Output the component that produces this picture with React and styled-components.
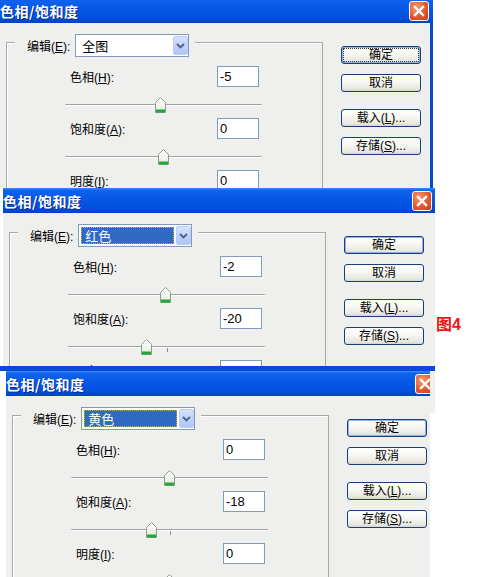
import React from 'react';
import styled, { createGlobalStyle } from 'styled-components';

const FACE = '#EFEFED';
const FRAME_BLUE = '#0A48D6';

const GlobalStyle = createGlobalStyle`
  html, body {
    margin: 0;
    padding: 0;
    background: #fff;
  }
  body {
    font-family: "Liberation Sans", "Noto Sans CJK SC", sans-serif;
    font-size: 12px;
    color: #000;
  }
`;

const Page = styled.div`
  width: 486px;
  height: 577px;
  overflow: hidden;
  background: #fff;
  display: flex;
  flex-direction: column;
`;

const Frame = styled.div`
  flex: none;
  display: flex;
  align-items: flex-start;
  height: ${p => p.$h}px;
  overflow: hidden;
`;

const Clip = styled.div`
  flex: none;
  width: ${p => p.$w}px;
  height: 100%;
  box-sizing: border-box;
  overflow: hidden;
  border-bottom: ${p => (p.$rim ? `5px solid ${FRAME_BLUE}` : 'none')};
`;

const Window = styled.div`
  width: 433px;
  margin: ${p => p.$y}px 0 0 ${p => p.$x}px;
  background: ${FACE};
`;

const TitleBar = styled.div`
  height: 25px;
  display: flex;
  align-items: center;
  justify-content: space-between;
  padding-right: 4px;
  background: linear-gradient(
    to bottom,
    #3A8CF8 0%,
    #0E62EC 10%,
    #0558E6 45%,
    #0250DC 80%,
    #0142C4 100%
  );
`;

const Title = styled.div`
  color: #fff;
  font: bold 14px "Noto Sans CJK SC", sans-serif;
  letter-spacing: 0.5px;
  text-shadow: 1px 1px 0 #0A2A90;
`;

const CloseBox = styled.div`
  width: 20px;
  height: 20px;
  box-sizing: border-box;
  border: 1px solid #fff;
  border-radius: 3px;
  background: radial-gradient(circle at 35% 30%, #F49A74 0%, #E4582E 55%, #C43C16 100%);
  display: flex;
  align-items: center;
  justify-content: center;
`;

const Body = styled.div`
  display: flex;
  align-items: flex-start;
  height: 230px;
  padding-left: 6px;
  border-right: 3px solid ${p => (p.$edge ? FRAME_BLUE : FACE)};
`;

const Group = styled.div`
  flex: none;
  width: 317px;
  height: 260px;
  box-sizing: border-box;
  margin-top: 19px;
  border: 1px solid #A7A7A5;
  border-bottom: none;
  box-shadow: inset 1px 1px 0 #fff;
`;

const Legend = styled.div`
  display: flex;
  align-items: center;
  gap: 5px;
  width: fit-content;
  margin: -9px 0 0 8px;
  padding: 0 6px 0 12px;
  background: ${FACE};
`;

const Key = styled.span`
  text-decoration: underline;
  text-underline-offset: 1px;
`;

const Select = styled.div`
  width: 114px;
  height: 23px;
  box-sizing: border-box;
  border: 1px solid #7F9DB9;
  background: #fff;
  display: flex;
  align-items: center;
  padding: 1px 0 1px 2px;
  gap: 2px;
`;

const SelectText = styled.div`
  flex: 1;
  height: 17px;
  box-sizing: border-box;
  display: flex;
  align-items: center;
  padding-left: 3px;
  font-size: 13px;
  background: ${p => (p.$active ? '#316AC5' : 'transparent')};
  color: ${p => (p.$active ? '#fff' : '#000')};
  border: 1px dotted ${p => (p.$active ? '#D8B020' : 'transparent')};
`;

const DropButton = styled.div`
  width: 15px;
  height: 19px;
  box-sizing: border-box;
  border: 1px solid #BCCDF4;
  border-radius: 2px;
  background: linear-gradient(to bottom, #D6E2FD, #BED0FA 60%, #B0C5F5);
  display: flex;
  align-items: center;
  justify-content: center;
`;

const Row = styled.div`
  display: flex;
  align-items: center;
  justify-content: space-between;
  width: 189px;
  height: 21px;
  margin: ${p => p.$gap}px 0 0 63px;
`;

const Label = styled.div`
  font-size: 12px;
`;

const Field = styled.div`
  width: 42px;
  height: 21px;
  box-sizing: border-box;
  border: 1px solid #7F9DB9;
  background: #fff;
  padding-left: 2px;
  display: flex;
  align-items: center;
  font-size: 13px;
`;

const Slider = styled.div`
  position: relative;
  width: 197px;
  height: 16px;
  margin: 10px 0 0 58px;
`;

const Track = styled.div`
  position: absolute;
  left: 0;
  right: 0;
  top: 7px;
  height: 0;
  border-top: 1px solid #A2A2A0;
  border-bottom: 1px solid #fff;
  border-radius: 1px;
`;

const Tick = styled.div`
  position: absolute;
  left: 50%;
  top: 9px;
  width: 1px;
  height: 4px;
  background: #8E8E8C;
`;

const Thumb = styled.svg`
  position: absolute;
  top: 0;
  left: calc(${p => p.$pos}% - 5.5px);
`;

const Buttons = styled.div`
  flex: none;
  display: flex;
  flex-direction: column;
  width: 80px;
  margin: 23px 0 0 18px;
`;

const Button = styled.div`
  height: 18px;
  box-sizing: border-box;
  margin-top: ${p => p.$gap}px;
  border: 1px solid #1A3E78;
  border-radius: 3px;
  background: linear-gradient(to bottom, #FFFFFF 0%, #F6F6F2 45%, #E8E7E0 85%, #D8D4CA 100%);
  box-shadow: ${p => (p.$default ? 'inset 0 0 0 1px #8FB2EE' : 'none')};
  outline: ${p => (p.$focus ? '1px dotted #333' : 'none')};
  outline-offset: -3px;
  display: flex;
  align-items: center;
  justify-content: center;
  font-size: 12px;
  line-height: 1;
`;

const Caption = styled.div`
  margin: 129px 0 0 1px;
  color: #F01414;
  font: bold 16px/16px "Liberation Sans", "Noto Sans CJK SC", sans-serif;
`;

const Sliver = styled.div`
  flex: none;
  width: 5px;
  height: 42px;
  background: ${FACE};
`;

const CloseIcon = () => (
  <svg width="12" height="12" viewBox="0 0 12 12">
    <path d="M2 2 L10 10 M10 2 L2 10" stroke="#fff" strokeWidth="2.4" strokeLinecap="square" />
  </svg>
);

const Chevron = () => (
  <svg width="9" height="6" viewBox="0 0 9 6">
    <path d="M1 1 L4.5 4.5 L8 1" fill="none" stroke="#4D6185" strokeWidth="1.8" />
  </svg>
);

const ThumbShape = ({ pos }) => (
  <Thumb $pos={pos} width="11" height="16" viewBox="0 0 11 16">
    <defs>
      <linearGradient id="thumbFill" x1="0" y1="0" x2="0" y2="1">
        <stop offset="0" stopColor="#FFFFFF" />
        <stop offset="1" stopColor="#E6E6E2" />
      </linearGradient>
    </defs>
    <path d="M0.5 5.5 L5.5 0.5 L10.5 5.5 L10.5 15.5 L0.5 15.5 Z" fill="url(#thumbFill)" stroke="#8AA08A" />
    <rect x="1" y="12.5" width="9" height="3" fill="#22A83A" />
  </Thumb>
);

const percent = (value, min, max) => ((value - min) / (max - min)) * 100;

const SliderBar = ({ value, min, max }) => (
  <Slider>
    <Track />
    <Tick />
    <ThumbShape pos={percent(value, min, max)} />
  </Slider>
);

const Dialog = ({ data, x, y, edge }) => (
  <Window $x={x} $y={y}>
    <TitleBar>
      <Title>色相/饱和度</Title>
      <CloseBox>
        <CloseIcon />
      </CloseBox>
    </TitleBar>
    <Body $edge={edge}>
      <Group>
        <Legend>
          <Label>编辑(<Key>E</Key>):</Label>
          <Select>
            <SelectText $active={data.active}>{data.channel}</SelectText>
            <DropButton>
              <Chevron />
            </DropButton>
          </Select>
        </Legend>
        <Row $gap={9}>
          <Label>色相(<Key>H</Key>):</Label>
          <Field>{data.hue}</Field>
        </Row>
        <SliderBar value={data.hue} min={-180} max={180} />
        <Row $gap={5}>
          <Label>饱和度(<Key>A</Key>):</Label>
          <Field>{data.sat}</Field>
        </Row>
        <SliderBar value={data.sat} min={-100} max={100} />
        <Row $gap={5}>
          <Label>明度(<Key>I</Key>):</Label>
          <Field>{data.light}</Field>
        </Row>
        <SliderBar value={data.light} min={-100} max={100} />
      </Group>
      <Buttons>
        <Button $gap={0} $default $focus={data.focus}>确定</Button>
        <Button $gap={10}>取消</Button>
        <Button $gap={17}>载入(<Key>L</Key>)...</Button>
        <Button $gap={10}>存储(<Key>S</Key>)...</Button>
      </Buttons>
    </Body>
  </Window>
);

const dialogs = [
  { channel: '全图', active: false, focus: true, hue: -5, sat: 0, light: 0 },
  { channel: '红色', active: true, focus: false, hue: -2, sat: -20, light: 0 },
  { channel: '黄色', active: true, focus: false, hue: 0, sat: -18, light: 0 },
];

export default function App() {
  return (
    <>
      <GlobalStyle />
      <Page>
        <Frame $h={188}>
          <Clip $w={433}>
            <Dialog data={dialogs[0]} x={0} y={-2} edge />
          </Clip>
        </Frame>
        <Frame $h={183}>
          <Clip $w={435} $rim>
            <Dialog data={dialogs[1]} x={3} y={0} />
          </Clip>
          <Caption>图4</Caption>
        </Frame>
        <Frame $h={206}>
          <Clip $w={430}>
            <Dialog data={dialogs[2]} x={6} y={0} />
          </Clip>
          <Sliver />
        </Frame>
      </Page>
    </>
  );
}
